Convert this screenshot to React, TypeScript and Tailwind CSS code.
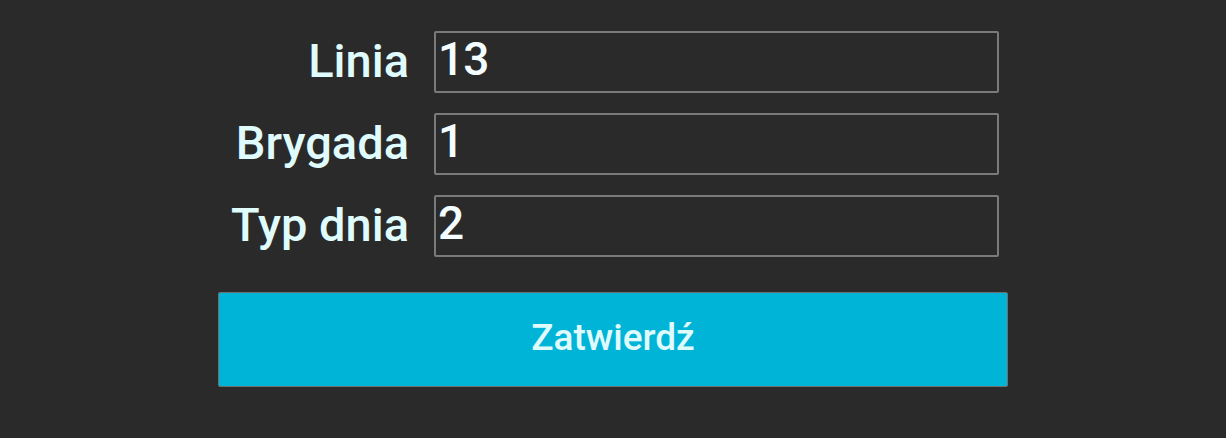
import React, { useState } from 'react';

const fields = [
  { label: 'Linia', value: '13' },
  { label: 'Brygada', value: '1' },
  { label: 'Typ dnia', value: '2' },
];

const App: React.FC = () => {
  const [values, setValues] = useState<string[]>(fields.map(f => f.value));

  return (
    <div className="min-h-screen w-full bg-[#2a2a2a] font-['Roboto',sans-serif]">
      <div className="mx-auto w-[790px] pt-[31px]">
        <div className="flex flex-col gap-[20px]">
          {fields.map((f, i) => (
            <div key={f.label} className="flex items-center gap-[25px]">
              <label className="w-[191px] pb-[3px] text-right text-[47px] font-medium leading-none text-[#e0fbfc]">
                {f.label}
              </label>
              <input
                value={values[i]}
                onChange={e => {
                  const next = [...values];
                  next[i] = e.target.value;
                  setValues(next);
                }}
                className="h-[62px] w-[565px] rounded-[2px] border-2 border-[#7a7a7a] bg-transparent pl-[2px] pb-[5px] text-[46px] font-medium tracking-[-1px] text-[#f4fdff] outline-none"
              />
            </div>
          ))}
        </div>
        <button className="mt-[35px] h-[95px] w-[790px] rounded-[2px] border border-[#6f6f6f] bg-[#00b4d8] pb-[4px] text-[37px] font-medium text-[#e0fbfc]">
          Zatwierdź
        </button>
      </div>
    </div>
  );
};

export default App;
